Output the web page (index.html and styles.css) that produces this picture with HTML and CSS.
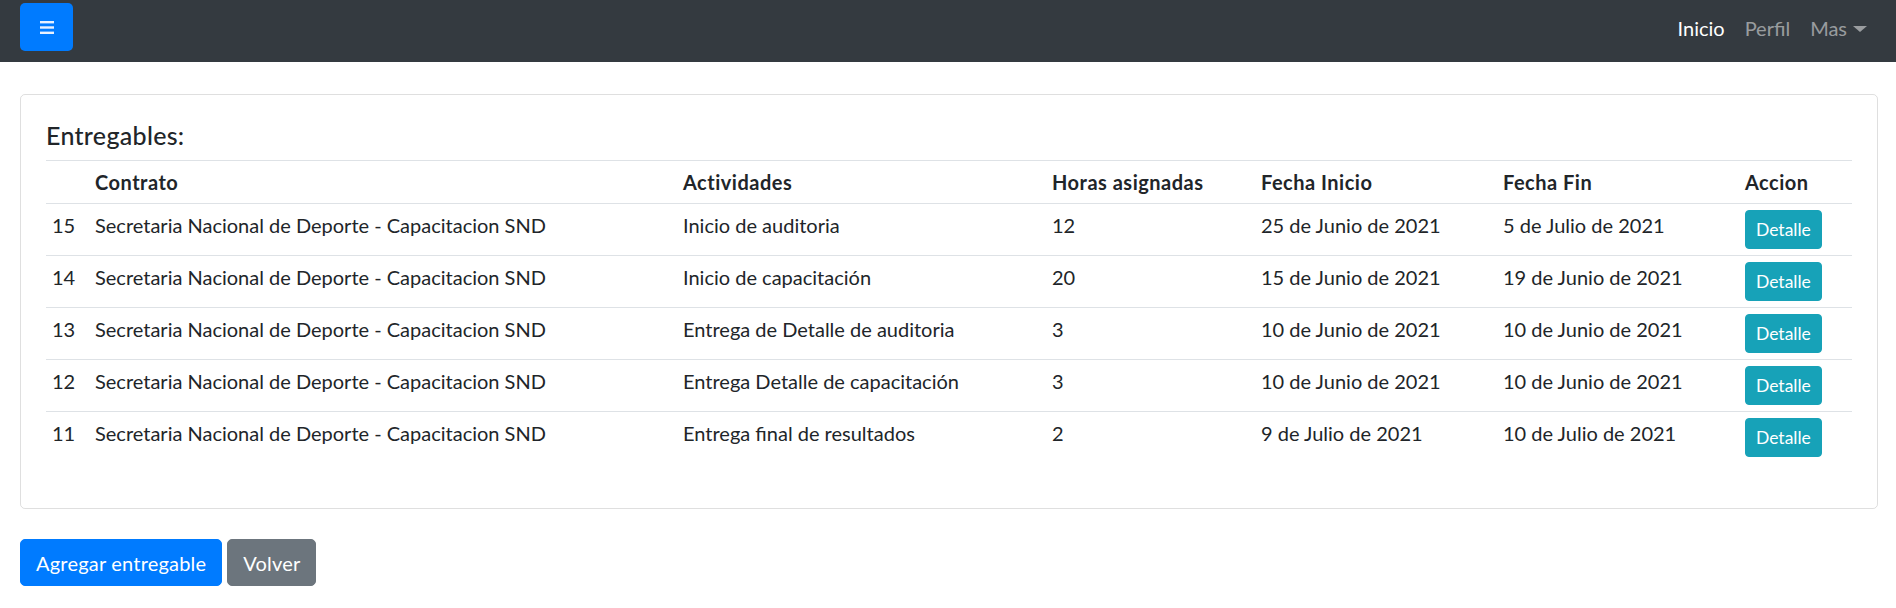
FILE: index.html
```html
<!DOCTYPE html>
<html lang="es">
<head>
<meta charset="utf-8">
<title>Entregables</title>
<link rel="stylesheet" href="styles.css">
</head>
<body>
<nav class="navbar">
  <button class="toggler" type="button" aria-label="Menu">
    <svg width="14" height="13" viewBox="0 0 14 13"><rect x="0" y="0" width="14" height="2.4" fill="#e8f1ff"/><rect x="0" y="5.3" width="14" height="2.4" fill="#e8f1ff"/><rect x="0" y="10.6" width="14" height="2.4" fill="#e8f1ff"/></svg>
  </button>
  <ul class="nav-links">
    <li><a class="nav-link active" href="#">Inicio</a></li>
    <li><a class="nav-link" href="#">Perfil</a></li>
    <li><a class="nav-link dropdown" href="#">Mas<span class="caret"></span></a></li>
  </ul>
</nav>
<main class="container">
  <section class="card">
    <h5 class="card-title">Entregables:</h5>
    <table class="table">
      <colgroup>
        <col class="c-id"><col class="c-contrato"><col class="c-act"><col class="c-horas"><col class="c-ini"><col class="c-fin"><col class="c-acc">
      </colgroup>
      <thead>
        <tr><th></th><th>Contrato</th><th>Actividades</th><th>Horas asignadas</th><th>Fecha Inicio</th><th>Fecha Fin</th><th>Accion</th></tr>
      </thead>
      <tbody>
        <tr><td>15</td><td>Secretaria Nacional de Deporte - Capacitacion SND</td><td>Inicio de auditoria</td><td>12</td><td>25 de Junio de 2021</td><td>5 de Julio de 2021</td><td><button class="btn-info">Detalle</button></td></tr>
        <tr><td>14</td><td>Secretaria Nacional de Deporte - Capacitacion SND</td><td>Inicio de capacitación</td><td>20</td><td>15 de Junio de 2021</td><td>19 de Junio de 2021</td><td><button class="btn-info">Detalle</button></td></tr>
        <tr><td>13</td><td>Secretaria Nacional de Deporte - Capacitacion SND</td><td>Entrega de Detalle de auditoria</td><td>3</td><td>10 de Junio de 2021</td><td>10 de Junio de 2021</td><td><button class="btn-info">Detalle</button></td></tr>
        <tr><td>12</td><td>Secretaria Nacional de Deporte - Capacitacion SND</td><td>Entrega Detalle de capacitación</td><td>3</td><td>10 de Junio de 2021</td><td>10 de Junio de 2021</td><td><button class="btn-info">Detalle</button></td></tr>
        <tr><td>11</td><td>Secretaria Nacional de Deporte - Capacitacion SND</td><td>Entrega final de resultados</td><td>2</td><td>9 de Julio de 2021</td><td>10 de Julio de 2021</td><td><button class="btn-info">Detalle</button></td></tr>
      </tbody>
    </table>
  </section>
  <div class="actions">
    <button class="btn btn-primary">Agregar entregable</button>
    <button class="btn btn-secondary">Volver</button>
  </div>
</main>
</body>
</html>
```
FILE: styles.css
```css
* { box-sizing: border-box; }
html, body { margin: 0; padding: 0; }
body {
  font-family: Lato, "Open Sans", sans-serif;
  font-size: 20px;
  line-height: 30px;
  color: #212529;
  background: #fff;
}
.navbar {
  height: 62px;
  background: #343a40;
  display: flex;
  justify-content: space-between;
  align-items: flex-start;
  padding: 3px 19px 0 20px;
}
.toggler {
  width: 53px;
  height: 48px;
  background: #007bff;
  border: none;
  border-radius: 5px;
  display: flex;
  align-items: center;
  justify-content: center;
  padding: 0;
}
.nav-links {
  list-style: none;
  margin: 10px 0 0 0;
  padding: 0;
  display: flex;
}
.nav-link {
  display: block;
  padding: 0 10px;
  color: rgba(255,255,255,.5);
  text-decoration: none;
}
.nav-link.active { color: #fff; }
.caret {
  display: inline-block;
  width: 0; height: 0;
  margin-left: 6px;
  vertical-align: 4px;
  border-top: 6px solid rgba(255,255,255,.5);
  border-left: 7px solid transparent;
  border-right: 7px solid transparent;
}
.container { padding: 0 18px 0 20px; }
.card {
  margin-top: 32px;
  border: 1px solid rgba(0,0,0,.125);
  border-radius: 5px;
  padding: 25px;
}
.card-title {
  margin: 0 0 10px 0;
  font-size: 25px;
  line-height: 30px;
  font-weight: 500;
  letter-spacing: 0.3px;
}
.table {
  width: 100%;
  table-layout: fixed;
  border-collapse: collapse;
  margin-bottom: 20px;
}
.c-id { width: 43px; }
.c-contrato { width: 588px; }
.c-act { width: 369px; }
.c-horas { width: 209px; }
.c-ini { width: 242px; }
.c-fin { width: 242px; }
.c-acc { width: 113px; }
.table th, .table td {
  padding: 6px;
  border-top: 1px solid #dee2e6;
  text-align: left;
  vertical-align: top;
  white-space: nowrap;
}
.table th { font-weight: 700; letter-spacing: 0.5px; }
.btn-info {
  font-family: inherit;
  font-size: 17.5px;
  line-height: 27px;
  padding: 5px 10px;
  height: 39px;
  color: #fff;
  background: #17a2b8;
  border: 1px solid #17a2b8;
  border-radius: 4px;
}
.actions {
  margin-top: 30px;
  display: flex;
  gap: 5px;
}
.btn {
  font-family: inherit;
  font-size: 20px;
  line-height: 30px;
  padding: 7px 15px;
  height: 47px;
  color: #fff;
  border-radius: 5px;
  letter-spacing: 0.2px;
}
.btn-primary { background: #007bff; border: 1px solid #007bff; }
.btn-secondary { background: #6c757d; border: 1px solid #6c757d; }
```
